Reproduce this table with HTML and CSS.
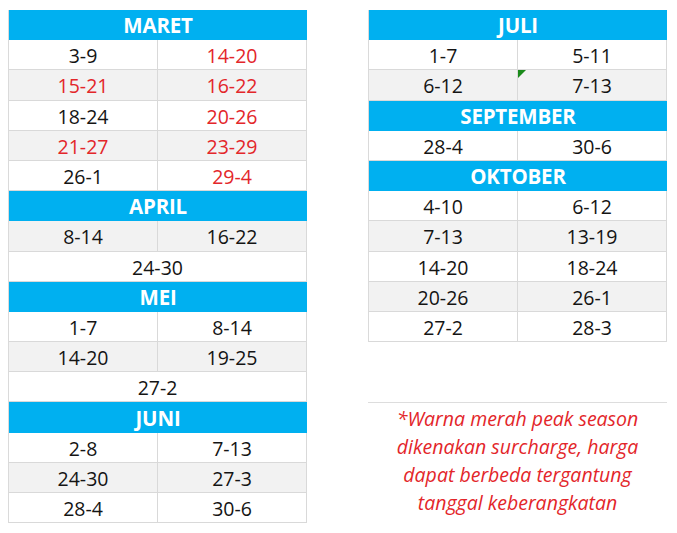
FILE: index.html
```html
<!DOCTYPE html>
<html>
<head>
<meta charset="utf-8">
<link rel="stylesheet" href="styles.css">
</head>
<body>
<div class="page">
  <div class="col">
    <div class="sheet">
      <div class="hd">MARET</div>
      <div class="c">3-9</div><div class="c red">14-20</div>
      <div class="c g red">15-21</div><div class="c g red">16-22</div>
      <div class="c">18-24</div><div class="c red">20-26</div>
      <div class="c g red">21-27</div><div class="c g red">23-29</div>
      <div class="c">26-1</div><div class="c red">29-4</div>
      <div class="hd">APRIL</div>
      <div class="c g">8-14</div><div class="c g">16-22</div>
      <div class="c span">24-30</div>
      <div class="hd">MEI</div>
      <div class="c">1-7</div><div class="c">8-14</div>
      <div class="c g">14-20</div><div class="c g">19-25</div>
      <div class="c span">27-2</div>
      <div class="hd">JUNI</div>
      <div class="c">2-8</div><div class="c">7-13</div>
      <div class="c g">24-30</div><div class="c g">27-3</div>
      <div class="c">28-4</div><div class="c">30-6</div>
    </div>
  </div>
  <div class="col">
    <div class="sheet">
      <div class="hd">JULI</div>
      <div class="c">1-7</div><div class="c">5-11</div>
      <div class="c g">6-12</div><div class="c g flag">7-13</div>
      <div class="hd">SEPTEMBER</div>
      <div class="c">28-4</div><div class="c">30-6</div>
      <div class="hd">OKTOBER</div>
      <div class="c">4-10</div><div class="c">6-12</div>
      <div class="c g">7-13</div><div class="c g">13-19</div>
      <div class="c">14-20</div><div class="c">18-24</div>
      <div class="c g">20-26</div><div class="c g">26-1</div>
      <div class="c">27-2</div><div class="c">28-3</div>
    </div>
    <div class="note">
      <p>*Warna merah peak season<br>dikenakan surcharge, harga<br>dapat berbeda tergantung<br>tanggal keberangkatan</p>
    </div>
  </div>
</div>
</body>
</html>
```
FILE: styles.css
```css
html, body {
  margin: 0;
  padding: 0;
  background: #ffffff;
}
body {
  font-family: "Open Sans", "Liberation Sans", sans-serif;
}
.page {
  display: flex;
  gap: 61px;
  padding: 10px 0 0 8px;
}
.col {
  display: flex;
  flex-direction: column;
  width: 299px;
}
.sheet {
  display: grid;
  grid-template-columns: 149px 149px;
  grid-auto-rows: 30.2px;
  border-left: 1px solid #dadada;
}
.hd {
  grid-column: 1 / span 2;
  background: #00b0f0;
  color: #ffffff;
  font-weight: 700;
  font-size: 20.5px;
  display: flex;
  align-items: center;
  justify-content: center;
  letter-spacing: -0.2px;
}
.c {
  display: flex;
  align-items: center;
  justify-content: center;
  padding-top: 2px;
  box-sizing: border-box;
  border-right: 1px solid #d9d9d9;
  border-bottom: 1px solid #d9d9d9;
  font-size: 19.5px;
  color: #141414;
  background: #ffffff;
}
.c.g {
  background: #f2f2f2;
}
.c.red {
  color: #e3262a;
}
.c.span {
  grid-column: 1 / span 2;
}
.c.flag {
  position: relative;
}
.c.flag::before {
  content: "";
  position: absolute;
  left: 0;
  top: 0;
  width: 0;
  height: 0;
  border-top: 8px solid #1a8a1a;
  border-right: 8px solid transparent;
}
.note {
  margin-top: 60px;
  border-top: 1px solid #dddddd;
  text-align: center;
}
.note p {
  margin: 0;
  padding-top: 2px;
  font-style: italic;
  font-size: 19.5px;
  line-height: 28px;
  color: #e3262a;
}
```
